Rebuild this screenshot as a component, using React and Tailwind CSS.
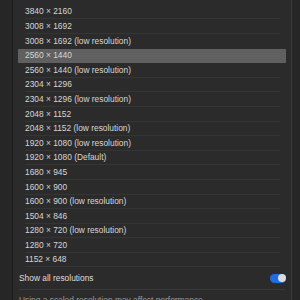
export default function App() {
  const rows = [
    "3840 × 2160",
    "3008 × 1692",
    "3008 × 1692 (low resolution)",
    "2560 × 1440",
    "2560 × 1440 (low resolution)",
    "2304 × 1296",
    "2304 × 1296 (low resolution)",
    "2048 × 1152",
    "2048 × 1152 (low resolution)",
    "1920 × 1080 (low resolution)",
    "1920 × 1080 (Default)",
    "1680 × 945",
    "1600 × 900",
    "1600 × 900 (low resolution)",
    "1504 × 846",
    "1280 × 720 (low resolution)",
    "1280 × 720",
    "1152 × 648",
  ];
  const selected = 3;
  return (
    <div
      className="flex w-[300px] h-[300px] overflow-hidden bg-[#262626] text-[8.4px] leading-none"
      style={{ fontFamily: '"Liberation Sans", Arial, sans-serif' }}
    >
      <div className="w-[12px] shrink-0 bg-[#262626]" />
      <div className="w-[1px] shrink-0 bg-[#1c1c1c]" />
      <div className="w-[278px] shrink-0 bg-[#2b2b2b] flex flex-col pt-[4.8px] px-[5px]">
        {rows.map((r, i) => (
          <div
            key={r}
            className={
              "h-[14.6px] shrink-0 " +
              (i === selected ? "bg-[#606060] rounded-[1px]" : "")
            }
          >
            <div
              className={
                "ml-[7px] mr-[6px] h-full flex items-center border-b " +
                (i === selected || i === selected - 1 ? "border-transparent" : "border-[#353535]") +
                " text-[#d6d6d6]"
              }
            >
              {r}
            </div>
          </div>
        ))}
        <div className="h-[22.4px] shrink-0 flex items-center justify-between border-b border-[#383838] ml-[1px] mr-[1px]">
          <span className="text-[#dedede]">Show all resolutions</span>
          <div className="w-[16px] h-[9px] rounded-full bg-[#1b6fe2] flex items-center justify-end pr-[0.5px] mr-[-1px]">
            <div className="w-[8px] h-[8px] rounded-full bg-[#dcdcdc]" />
          </div>
        </div>
        <div className="pt-[6px] pl-[1px] text-[#9a9a9a] whitespace-nowrap">
          Using a scaled resolution may affect performance.
        </div>
      </div>
      <div className="w-[1px] shrink-0 bg-[#3a3a3a]" />
      <div className="flex-1 bg-[#262626]" />
    </div>
  );
}
